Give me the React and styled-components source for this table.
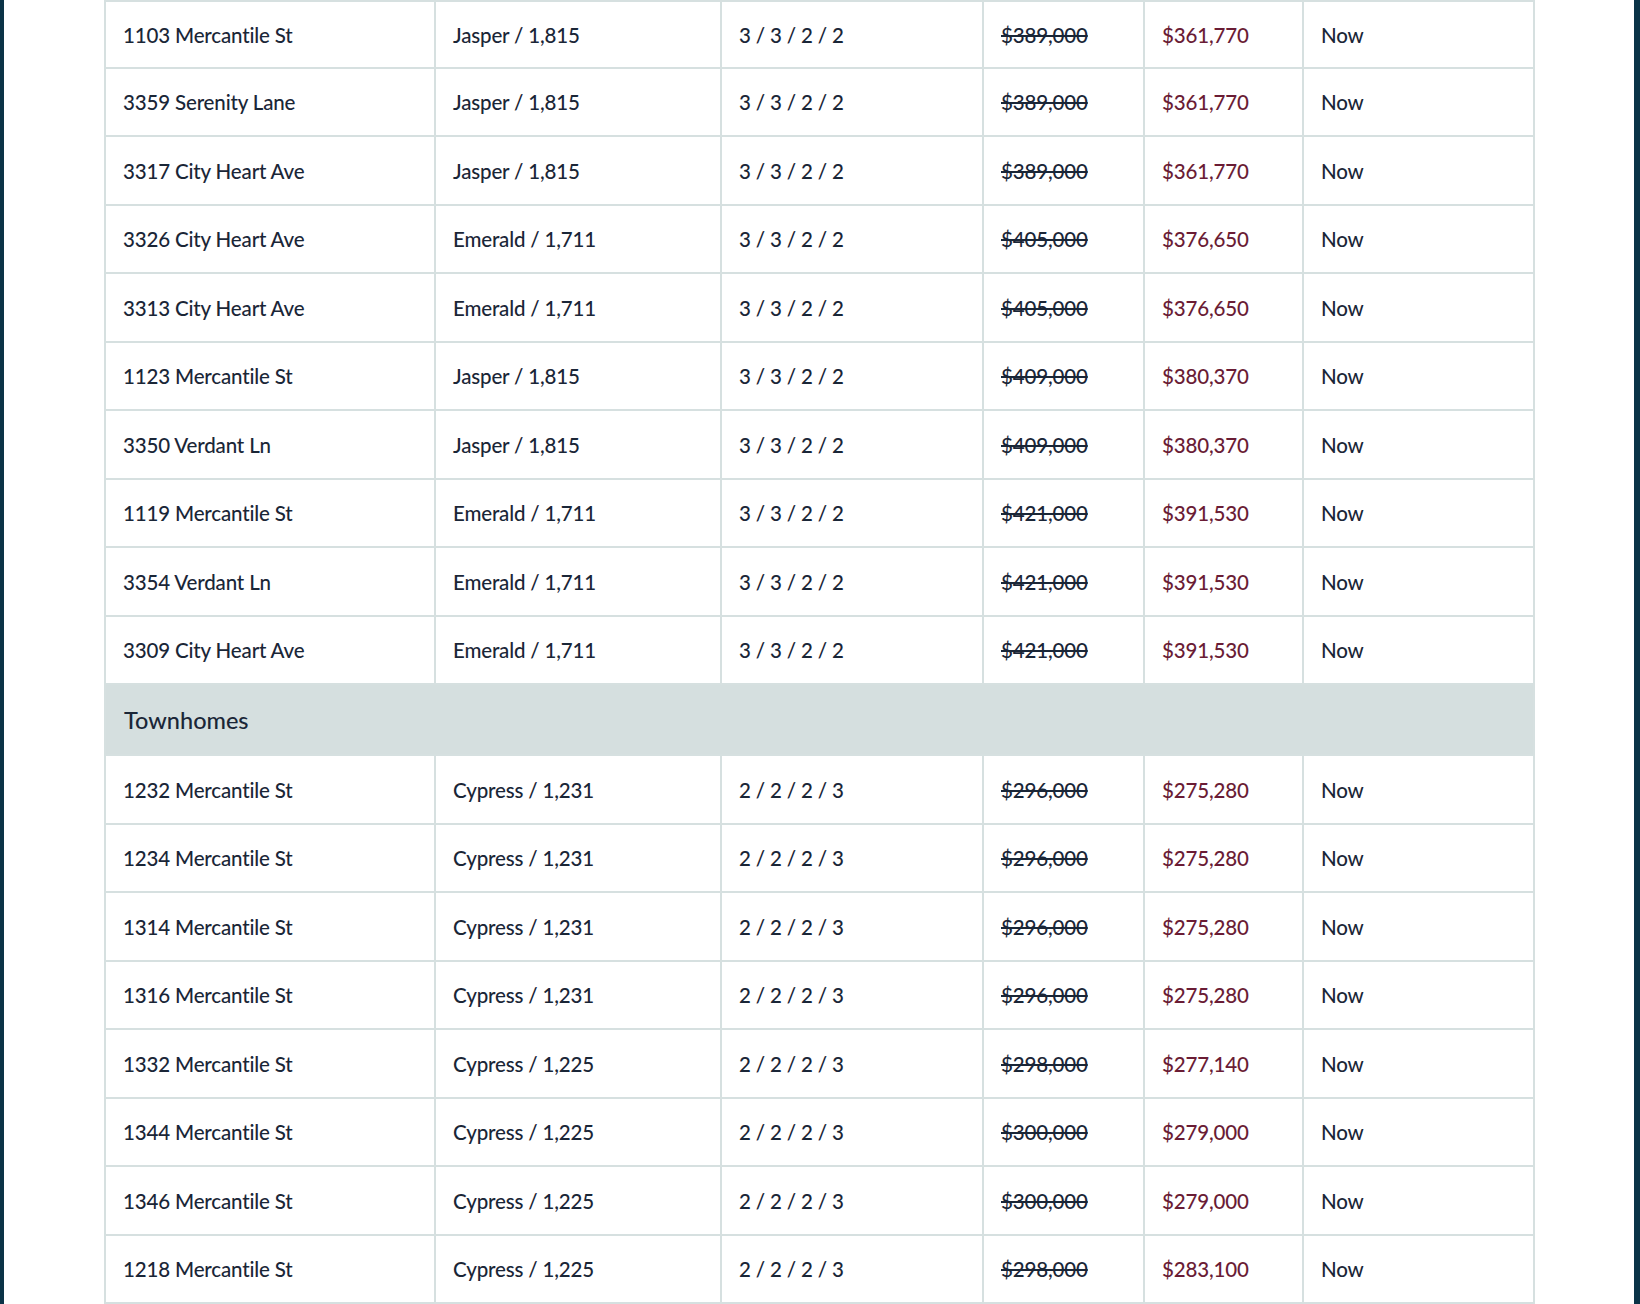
import React from "react";
import styled, { createGlobalStyle } from "styled-components";

const Global = createGlobalStyle`
  html, body { margin: 0; padding: 0; background: #ffffff; }
  body { font-family: Lato, "Open Sans", sans-serif; color: #1a2637; }
`;

const Frame = styled.div`
  box-sizing: border-box;
  height: 1304px;
  overflow: hidden;
  border-left: 4px solid #0b3347;
  border-right: 6px solid #0b3347;
  padding-left: 100px;
  background: #fff;
`;

const Table = styled.div`
  width: 1431px;
  border-left: 2px solid #d6e0e0;
  border-top: 2px solid #d6e0e0;
  box-sizing: border-box;
`;

const Row = styled.div`
  display: grid;
  grid-template-columns: 330px 286px 262px 161px 159px 231px;
  height: ${(p) => (p.$first ? "66.5px" : "68.5px")};
  box-sizing: border-box;
  border-bottom: 2px solid #d6e0e0;
`;

const Cell = styled.div`
  display: flex;
  align-items: center;
  padding-left: 17px;
  padding-top: 1px;
  border-right: 2px solid #d6e0e0;
  font-size: 20.5px;
  font-weight: 500;
  letter-spacing: -0.15px;
  white-space: nowrap;
  color: ${(p) => (p.$sale ? "#6a1c35" : "#1a2637")};
  text-decoration: ${(p) => (p.$strike ? "line-through" : "none")};
  text-decoration-thickness: 2px;
`;

const GroupRow = styled.div`
  height: 71px;
  box-sizing: border-box;
  background: #d5dfdf;
  border-right: 2px solid #d6e0e0;
  border-bottom: 2px solid #d6e0e0;
  display: flex;
  align-items: center;
  padding-left: 18px;
  font-size: 23.5px;
  font-weight: 500;
  color: #1a2637;
`;

const homes = [
  ["1103 Mercantile St", "Jasper / 1,815", "3 / 3 / 2 / 2", "$389,000", "$361,770"],
  ["3359 Serenity Lane", "Jasper / 1,815", "3 / 3 / 2 / 2", "$389,000", "$361,770"],
  ["3317 City Heart Ave", "Jasper / 1,815", "3 / 3 / 2 / 2", "$389,000", "$361,770"],
  ["3326 City Heart Ave", "Emerald / 1,711", "3 / 3 / 2 / 2", "$405,000", "$376,650"],
  ["3313 City Heart Ave", "Emerald / 1,711", "3 / 3 / 2 / 2", "$405,000", "$376,650"],
  ["1123 Mercantile St", "Jasper / 1,815", "3 / 3 / 2 / 2", "$409,000", "$380,370"],
  ["3350 Verdant Ln", "Jasper / 1,815", "3 / 3 / 2 / 2", "$409,000", "$380,370"],
  ["1119 Mercantile St", "Emerald / 1,711", "3 / 3 / 2 / 2", "$421,000", "$391,530"],
  ["3354 Verdant Ln", "Emerald / 1,711", "3 / 3 / 2 / 2", "$421,000", "$391,530"],
  ["3309 City Heart Ave", "Emerald / 1,711", "3 / 3 / 2 / 2", "$421,000", "$391,530"],
];

const townhomes = [
  ["1232 Mercantile St", "Cypress / 1,231", "2 / 2 / 2 / 3", "$296,000", "$275,280"],
  ["1234 Mercantile St", "Cypress / 1,231", "2 / 2 / 2 / 3", "$296,000", "$275,280"],
  ["1314 Mercantile St", "Cypress / 1,231", "2 / 2 / 2 / 3", "$296,000", "$275,280"],
  ["1316 Mercantile St", "Cypress / 1,231", "2 / 2 / 2 / 3", "$296,000", "$275,280"],
  ["1332 Mercantile St", "Cypress / 1,225", "2 / 2 / 2 / 3", "$298,000", "$277,140"],
  ["1344 Mercantile St", "Cypress / 1,225", "2 / 2 / 2 / 3", "$300,000", "$279,000"],
  ["1346 Mercantile St", "Cypress / 1,225", "2 / 2 / 2 / 3", "$300,000", "$279,000"],
  ["1218 Mercantile St", "Cypress / 1,225", "2 / 2 / 2 / 3", "$298,000", "$283,100"],
];

function HomeRow({ data, first }) {
  const [addr, plan, beds, was, now] = data;
  return (
    <Row $first={first}>
      <Cell>{addr}</Cell>
      <Cell>{plan}</Cell>
      <Cell>{beds}</Cell>
      <Cell $strike>{was}</Cell>
      <Cell $sale>{now}</Cell>
      <Cell>Now</Cell>
    </Row>
  );
}

export default function App() {
  return (
    <>
      <Global />
      <Frame>
        <Table>
          {homes.map((h, i) => (
            <HomeRow key={h[0]} data={h} first={i === 0} />
          ))}
          <GroupRow>Townhomes</GroupRow>
          {townhomes.map((h) => (
            <HomeRow key={h[0]} data={h} />
          ))}
        </Table>
      </Frame>
    </>
  );
}
